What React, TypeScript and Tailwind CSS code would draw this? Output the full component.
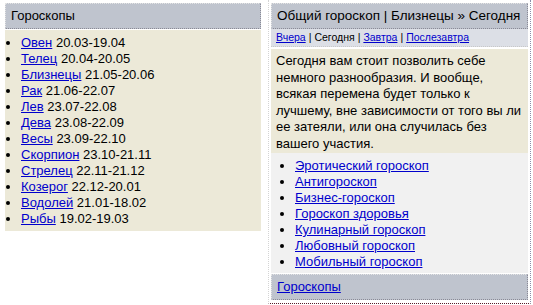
const signs: [string, string][] = [
  ['Овен', '20.03-19.04'],
  ['Телец', '20.04-20.05'],
  ['Близнецы', '21.05-20.06'],
  ['Рак', '21.06-22.07'],
  ['Лев', '23.07-22.08'],
  ['Дева', '23.08-22.09'],
  ['Весы', '23.09-22.10'],
  ['Скорпион', '23.10-21.11'],
  ['Стрелец', '22.11-21.12'],
  ['Козерог', '22.12-20.01'],
  ['Водолей', '21.01-18.02'],
  ['Рыбы', '19.02-19.03'],
]

const extras = [
  'Эротический гороскоп',
  'Антигороскоп',
  'Бизнес-гороскоп',
  'Гороскоп здоровья',
  'Кулинарный гороскоп',
  'Любовный гороскоп',
  'Мобильный гороскоп',
]

function BoxHeader({ children, big = false }: { children: React.ReactNode; big?: boolean }) {
  return (
    <div
      className={`h-[26px] flex items-center pl-[5px] whitespace-nowrap overflow-hidden bg-[#bfc4ce] border border-dotted border-t-[#e4e4e4] border-l-[#e4e4e4] border-b-[#8a8a96] border-r-[#8a8a96] text-black ${
        big ? 'text-[13.5px]' : 'text-[13px]'
      }`}
    >
      {children}
    </div>
  )
}

export default function App() {
  return (
    <div className="w-[533px] h-[305px] bg-white overflow-hidden font-['Liberation_Sans',Arial,sans-serif] flex items-start">
      {/* left box */}
      <div className="ml-[5px] mt-[3px] w-[256px]">
        <BoxHeader>Гороскопы</BoxHeader>
        <div className="bg-[#ece9d8] pt-[5px] pb-[4px] mt-px">
          <ul className="list-disc pl-[16px] text-[13px] leading-[16px]">
            {signs.map(([name, dates]) => (
              <li key={name}>
                <a href="#" className="text-[#0000cc] underline">{name}</a> {dates}
              </li>
            ))}
          </ul>
        </div>
      </div>

      {/* right column */}
      <div className="ml-[7px] w-[263px] h-[304px] border-l border-[#d4d4d4] border-r border-r-[#8c8ca8] border-b border-b-[#5a1a2a] border-dotted pt-[3px] pl-[2px] pr-[2px]">
        <BoxHeader big>Общий гороскоп | Близнецы » Сегодня</BoxHeader>
        <div className="h-[18px] flex items-center pl-[5px] whitespace-nowrap bg-[#dcdfe6] border-b border-dotted border-b-[#c8c8c8] text-[10.5px] text-black">
          <a href="#" className="text-[#0000cc] underline">Вчера</a>
          <span className="mx-[3px]">|</span>
          <span>Сегодня</span>
          <span className="mx-[3px]">|</span>
          <a href="#" className="text-[#0000cc] underline">Завтра</a>
          <span className="mx-[3px]">|</span>
          <a href="#" className="text-[#0000cc] underline">Послезавтра</a>
        </div>
        <div className="mt-[2px] bg-[#ece9d8] px-[5px] pt-[4px] pb-px text-[13px] leading-[16.5px] text-black">
          Сегодня вам стоит позволить себе немного разнообразия. И вообще, всякая перемена будет только к лучшему, вне зависимости от того вы ли ее затеяли, или она случилась без вашего участия.
        </div>
        <div className="bg-[#f1f1f1] pt-[5px] pb-[3px]">
          <ul className="list-disc pl-[24px] text-[13px] leading-[16px]">
            {extras.map((e) => (
              <li key={e}>
                <a href="#" className="text-[#0000cc] underline">{e}</a>
              </li>
            ))}
          </ul>
        </div>
        <div className="mt-px">
          <BoxHeader>
            <a href="#" className="text-[#0000cc] underline">Гороскопы</a>
          </BoxHeader>
        </div>
      </div>
    </div>
  )
}
